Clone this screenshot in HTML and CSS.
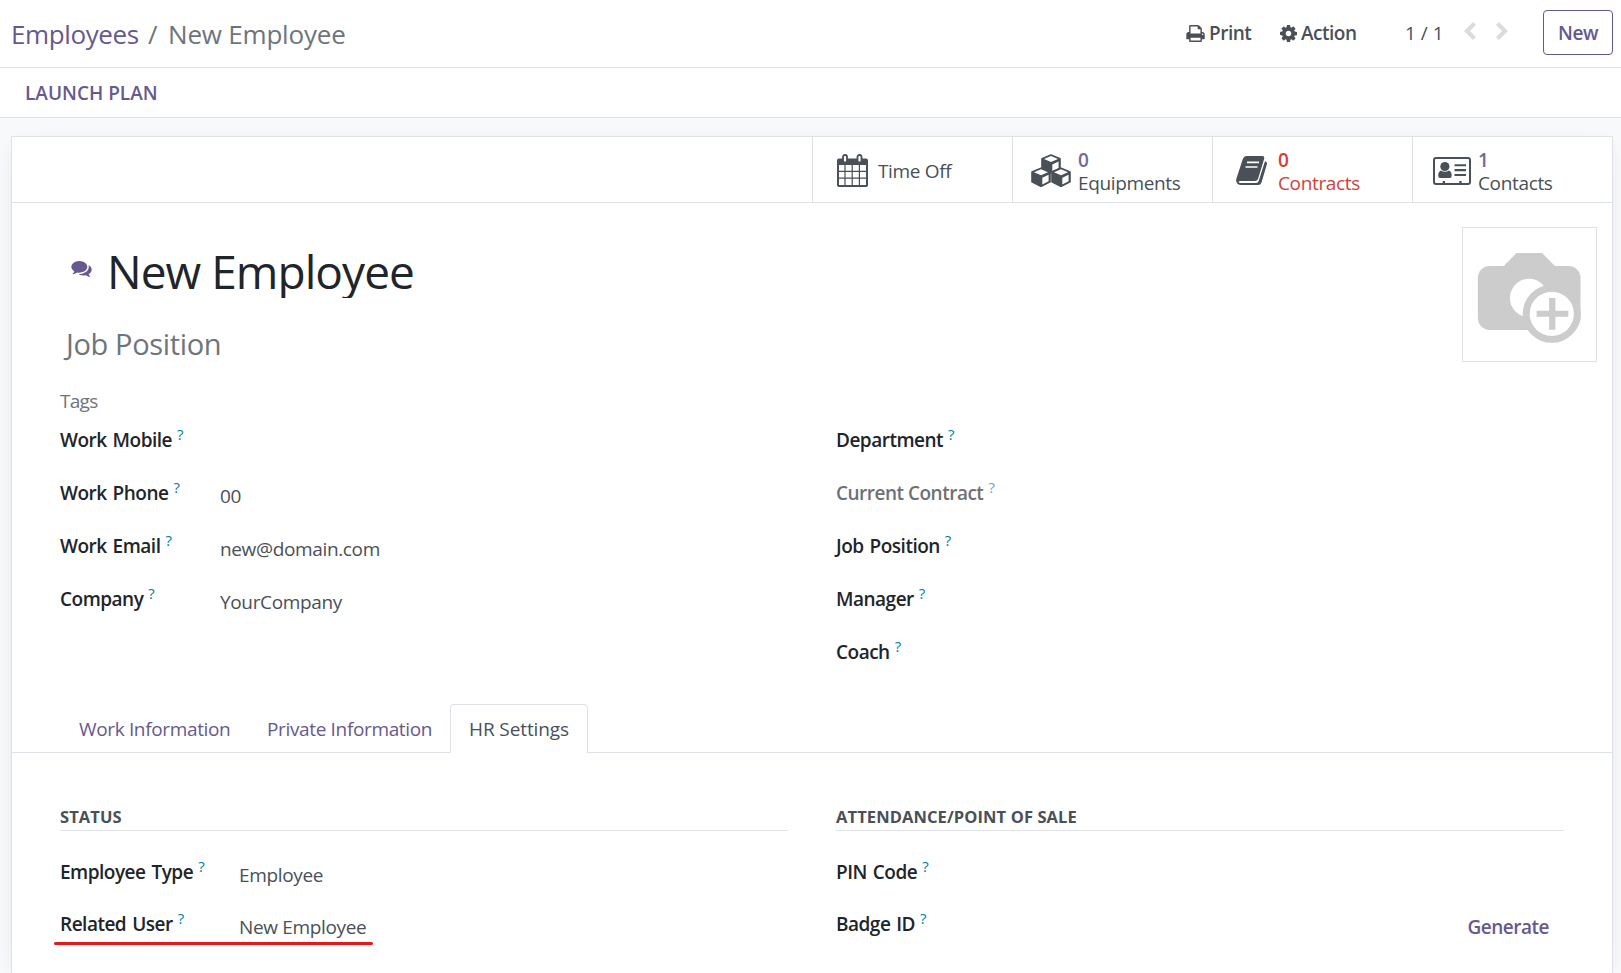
FILE: index.html
```html
<!DOCTYPE html>
<html lang="en">
<head>
<meta charset="utf-8">
<title>New Employee</title>
<link rel="stylesheet" href="styles.css">
</head>
<body>
<header class="control-panel">
  <nav class="breadcrumb"><a class="crumb">Employees</a><span class="sep">/</span><span class="current">New Employee</span></nav>
  <div class="actions">
    <button class="menu print"><svg class="print-icon" viewBox="64 128 1664 1536"><path fill-rule="evenodd" d="M448 1536h896v-256h-896v256zm0-640h896v-384h-160q-40 0-68-28t-28-68v-160h-640v640zm1152 64q0-26-19-45t-45-19-45 19-19 45 19 45 45 19 45-19 19-45zm128 0v416q0 13-9.500 22.500t-22.500 9.500h-224v160q0 40-28 68t-68 28h-960q-40 0-68-28t-28-68v-160h-224q-13 0-22.500-9.500t-9.500-22.500v-416q0-79 56.500-135.500t135.500-56.500h64v-544q0-40 28-68t68-28h672q40 0 88 20t76 48l152 152q28 28 48 76t20 88v256h64q79 0 135.500 56.500t56.500 135.500z"/></svg><span>Print</span></button>
    <button class="menu action"><svg class="gear-icon" viewBox="128 128 1536 1536"><path d="M1152 896q0-106-75-181t-181-75-181 75-75 181 75 181 181 75 181-75 75-181zm512-109v222q0 12-8 23t-20 13l-185 28q-19 54-39 91 35 50 107 138 10 12 10 25t-9 23q-27 37-99 108t-94 71q-12 0-26-9l-138-108q-44 23-91 38-16 136-29 186-7 28-36 28h-222q-14 0-24.500-8.500t-11.500-21.500l-28-184q-49-16-90-37l-141 107q-10 9-25 9-14 0-25-11-126-114-165-168-7-10-7-23 0-12 8-23 15-21 51-66.500t54-70.500q-27-50-41-99l-183-27q-13-2-21-12.500t-8-23.500v-222q0-12 8-23t19-13l186-28q14-46 39-92-40-57-107-138-10-12-10-24 0-10 9-23 26-36 98.500-107.500t94.500-71.500q13 0 26 10l138 107q44-23 91-38 16-136 29-186 7-28 36-28h222q14 0 24.500 8.500t11.500 21.500l28 184q49 16 90 37l142-107q9-9 24-9 13 0 25 10 129 119 165 170 7 8 7 22 0 12-8 23-15 21-51 66.500t-54 70.500q26 50 41 98l183 28q13 2 21 12.500t8 23.500z"/></svg><span>Action</span></button>
    <span class="pager">1 / 1</span>
    <svg class="chevron" viewBox="0 0 12 18"><path d="M10.500 1.500 3 9l7.500 7.500"/></svg>
    <svg class="chevron next" viewBox="0 0 12 18"><path d="M1.500 1.500 9 9l-7.500 7.500"/></svg>
    <button class="new-button">New</button>
  </div>
</header>
<div class="statusbar"><button class="launch">LAUNCH PLAN</button></div>
<main class="view">
  <section class="sheet">
    <div class="button-box">
      <button class="stat time-off">
        <svg class="ico calendar" viewBox="0 0 31 33"><path fill="#495057" fill-rule="evenodd" d="M2 4.500h27q2 0 2 2V31q0 2-2 2H2q-2 0-2-2V6.500q0-2 2-2zM2 11v5.800h5.400V11zm6.600 0v5.800h6V11zm7.200 0v5.800h6V11zm7.200 0v5.800h6V11zM2 18v5.500h5.400V18zm6.600 0v5.500h6V18zm7.200 0v5.500h6V18zm7.200 0v5.500h6V18zM2 24.700V31h5.400v-6.300zm6.600 0V31h6v-6.300zm7.200 0V31h6v-6.300zm7.200 0V31h6v-6.300z"/><rect x="6" y="1" width="4" height="7.500" rx="1.800" fill="#fff" stroke="#495057" stroke-width="1.800"/><rect x="20.500" y="1" width="4" height="7.500" rx="1.800" fill="#fff" stroke="#495057" stroke-width="1.800"/></svg>
        <span class="stat-text">Time Off</span>
      </button>
      <button class="stat equipments">
        <svg class="ico cubes" viewBox="0 0 40 33"><defs><g id="cube"><path fill="#495057" stroke="#495057" stroke-width="1.600" stroke-linejoin="round" d="M10 1l9 3.800v9.800l-9 4.500-9-4.500V4.800z"/><path fill="#fff" d="M10 2l7 3-7 3-7-3zM11.300 10.500l6.300-3v6.400l-6.300 3.200z"/></g></defs><use href="#cube" x="10" y="0"/><use href="#cube" x="0" y="13.300"/><use href="#cube" x="20" y="13.300"/></svg>
        <span class="stat-text"><b>0</b><span>Equipments</span></span>
      </button>
      <button class="stat contracts">
        <svg class="ico book" viewBox="0 0 31 29"><path fill="#495057" d="M10 0h16.500q2.200.3 1.700 2.700L22 23q-.7 2-3 2H4.500Q2.600 25 2.600 26q.2 1 2.200 1H20q2 0 2.700-2L29 5.200l1.500.8q.8 1 .3 2.600L25.500 26.500Q24.800 29 22 29H5Q1.500 29 .4 25.700q-.7-2 .3-4L6.800 3Q7.800.3 10 0z"/><path fill="none" stroke="#fff" stroke-width="1.700" d="M11 6.300h12M9.500 11h12"/></svg>
        <span class="stat-text"><b>0</b><span>Contracts</span></span>
      </button>
      <button class="stat contacts">
        <svg class="ico card" viewBox="0 0 38 28"><rect x="1" y="1" width="36" height="26" rx="2" fill="none" stroke="#495057" stroke-width="2"/><g fill="#495057"><circle cx="11.900" cy="9.500" r="4.600"/><path d="M8 13.500q4 2.500 8 0 2.700 1.300 2.700 5 0 2.500-2 2.500H7.200q-2 0-2-2.500 0-3.700 2.800-5zM21.500 7.300H33v2H21.500zM21.500 12H33v2.300H21.500zM21.500 17H33v2H21.500zM9.700 24h2.300v3H9.700zM26.300 24h2.300v3h-2.300z"/></g></svg>
        <span class="stat-text"><b>1</b><span>Contacts</span></span>
      </button>
    </div>
    <div class="identity">
      <div class="names">
        <div class="title-row">
          <svg class="chat" viewBox="0 256 1792 1408"><path d="M1408 768q0 139-94 257t-256.500 186.500-353.500 68.500q-86 0-176-16-124 88-278 128-36 9-86 16h-3q-11 0-20.500-8t-11.500-21q-1-3-1-6.500t.5-6.500 2-6l2.500-5 3.500-5.500 4-5 4.500-5 4-4.500q5-6 23-25t26-29.500 22.500-29 25-38.500 20.500-44q-124-72-195-177t-71-224q0-139 94-257t256.500-186.500 353.500-68.500 353.500 68.500 256.500 186.500 94 257zm384 256q0 120-71 224.500t-195 176.500q10 24 20.500 44t25 38.500 22.500 29 26 29.500 23 25q1 1 4 4.500t4.500 5 4 5 3.500 5.500l2.500 5 2 6 .5 6.500-1 6.500q-3 14-13 22t-22 7q-50-7-86-16-154-40-278-128-90 16-176 16-271 0-472-132 58 4 88 4 161 0 309-45t264-129q125-92 192-212t67-254q0-77-23-152 129 71 204 178t75 230z"/></svg>
          <h1>New Employee</h1>
        </div>
        <h2>Job Position</h2>
        <div class="tags">Tags</div>
      </div>
      <div class="photo"><svg viewBox="68 52 403 403"><g fill="#ccc"><rect x="113" y="167" width="311" height="194" rx="36"/><path d="M190 169l40-41h78l40 41z"/></g><circle cx="268" cy="264" r="58" fill="#fff"/><circle cx="337" cy="312" r="88" fill="#ccc"/><circle cx="337" cy="312" r="67" fill="#fff"/><path fill="#ccc" d="M329 264h19v39h39v18h-39v39h-19v-39h-38v-18h38z"/></svg></div>
    </div>
    <div class="columns fields">
      <div class="group">
        <div class="row"><label>Work Mobile<sup>?</sup></label></div>
        <div class="row"><label>Work Phone<sup>?</sup></label><span class="value">00</span></div>
        <div class="row"><label>Work Email<sup>?</sup></label><span class="value">new@domain.com</span></div>
        <div class="row"><label>Company<sup>?</sup></label><span class="value">YourCompany</span></div>
      </div>
      <div class="group">
        <div class="row"><label>Department<sup>?</sup></label></div>
        <div class="row muted"><label>Current Contract<sup>?</sup></label></div>
        <div class="row"><label>Job Position<sup>?</sup></label></div>
        <div class="row"><label>Manager<sup>?</sup></label></div>
        <div class="row"><label>Coach<sup>?</sup></label></div>
      </div>
    </div>
    <nav class="tabs"><a class="tab work">Work Information</a><a class="tab private">Private Information</a><a class="tab active">HR Settings</a></nav>
    <div class="columns settings">
      <div class="group">
        <h3>STATUS</h3>
        <div class="row"><label>Employee Type<sup>?</sup></label><span class="value">Employee</span></div>
        <div class="row marked"><label>Related User<sup>?</sup></label><span class="value">New Employee</span></div>
      </div>
      <div class="group">
        <h3>ATTENDANCE/POINT OF SALE</h3>
        <div class="row"><label>PIN Code<sup>?</sup></label></div>
        <div class="row"><label>Badge ID<sup>?</sup></label><a class="generate">Generate</a></div>
      </div>
    </div>
  </section>
</main>
</body>
</html>
```
FILE: styles.css
```css
* { box-sizing: border-box; }
body {
  margin: 0;
  height: 973px;
  overflow: hidden;
  display: flex;
  flex-direction: column;
  background: #fff;
  color: #495057;
  font: 19px/30px "Open Sans", "Noto Sans", sans-serif;
  letter-spacing: -0.35px;
}
button {
  font: inherit;
  letter-spacing: inherit;
  color: inherit;
  background: none;
  border: 0;
  padding: 0;
  margin: 0;
}
svg { display: block; flex: none; }
h1, h2, h3 { margin: 0; font-weight: 400; }

.control-panel {
  flex: none;
  height: 68px;
  padding: 0 8px 0 11px;
  display: flex;
  justify-content: space-between;
  border-bottom: 1px solid #dee2e6;
}
.breadcrumb {
  display: flex;
  padding-top: 15px;
  font-size: 26px;
  line-height: 38px;
  letter-spacing: -0.4px;
  color: #6c757d;
}
.current { letter-spacing: -0.2px; }
.crumb { color: #66598f; width: 137px; }
.sep { width: 20px; }
.actions { display: flex; align-items: flex-start; }
.menu { display: flex; align-items: center; height: 30px; margin-top: 18px; }
.print { width: 94px; }
.action { width: 125px; }
.print-icon { width: 19px; height: 17px; margin-right: 4px; fill: #495057; }
.gear-icon { width: 17px; height: 17px; margin-right: 4px; fill: #495057; }
.menu, .new-button, .launch, label, .generate, .stat b { font-weight: 600; letter-spacing: -0.5px; }
.pager { width: 59px; margin-top: 18px; letter-spacing: 0; }
.chevron { width: 12px; height: 18px; margin: 22px 20px 0 0; fill: none; stroke: #d8dbe0; stroke-width: 4.200; }
.chevron.next { margin-right: 35px; }
.new-button {
  width: 70px;
  height: 45px;
  margin-top: 10px;
  border: 1px solid #66598f;
  border-radius: 4px;
  color: #66598f;
}
.statusbar {
  flex: none;
  height: 50px;
  padding: 10px 25px;
  border-bottom: 1px solid #dee2e6;
}
.launch { color: #66598f; letter-spacing: 0; }

.view { flex: 1; display: flex; min-height: 0; padding: 18px 8px 0 11px; background: #f8f9fa; }
.sheet {
  flex: 1;
  background: #fff;
  border: 1px solid #dee2e6;
  border-bottom: 0;
  box-shadow: 0 5px 20px -8px rgba(0, 0, 0, .15);
}
.button-box {
  height: 66px;
  display: flex;
  justify-content: flex-end;
  border-bottom: 1px solid #dee2e6;
}
.stat {
  width: 200px;
  display: flex;
  align-items: center;
  text-align: left;
  border-left: 1px solid #dee2e6;
}
.stat-text { display: flex; flex-direction: column; padding-top: 4px; line-height: 23px; }
.stat b { color: #7566a0; }
.calendar { width: 31px; height: 33px; margin: 2px 10px 0 24px; }
.cubes { width: 40px; height: 33px; margin: 2px 7px 0 18px; }
.book { width: 31px; height: 29px; margin: 2px 11px 0 23px; }
.card { width: 38px; height: 28px; margin: 2px 7px 0 20px; }
.contracts .stat-text, .contracts b { color: #d23f3a; }

.identity {
  height: 220px;
  padding: 24px 15px 0 48px;
  display: flex;
  justify-content: space-between;
}
.title-row { display: flex; align-items: flex-start; padding: 11px 0 0 11px; }
.chat { width: 21px; height: 16px; margin: 23px 15px 0 0; fill: #66598f; }
h1 { height: 60px; overflow: hidden; font-size: 46px; line-height: 67px; letter-spacing: -0.95px; color: #212529; }
h2 { padding: 26px 0 0 6px; font-size: 29px; line-height: 40px; letter-spacing: -0.35px; color: #6c757d; }
.tags { margin-top: 22px; color: #6c757d; letter-spacing: -0.7px; }
.photo { width: 135px; height: 135px; border: 1px solid #dee2e6; }
.photo svg { width: 133px; height: 133px; }

.columns { display: grid; grid-template-columns: 728px 728px; column-gap: 48px; padding-left: 48px; }
.fields { height: 281px; padding-top: 2px; }
.row { display: flex; height: 53px; }
.row label { width: 160px; color: #212529; white-space: nowrap; word-spacing: 1.5px; }
.row sup {
  margin-left: 5px;
  font-size: 15px;
  line-height: 0;
  vertical-align: 7px;
  font-weight: 400;
  color: #017e9e;
}
.value { padding-top: 3px; }
.muted label { opacity: .65; word-spacing: 0; }

.tabs { height: 49px; display: flex; padding-left: 48px; border-bottom: 1px solid #dee2e6; color: #66598f; white-space: nowrap; }
.tab { height: 49px; padding: 9px 0 0 18px; border: 1px solid transparent; border-bottom: 0; }
.tab.work { width: 188px; }
.tab.private { width: 202px; }
.tab.active { width: 138px; letter-spacing: -0.1px; background: #fff; border-color: #dee2e6; border-radius: 4px 4px 0 0; color: #495057; }

.settings { padding-top: 49px; }
h3 {
  height: 29px;
  margin-bottom: 26px;
  border-bottom: 1px solid #e3e5e8;
  font-size: 16.5px;
  line-height: 30px;
  font-weight: 700;
  letter-spacing: 0.1px;
}
.settings .row { height: 52px; }
.settings label { width: 179px; }
.marked { position: relative; }
.marked::after {
  content: "";
  position: absolute;
  left: -6px;
  top: 33px;
  width: 319px;
  height: 3px;
  border-radius: 2px;
  background: #e3191c;
}
.generate { margin: 3px 15px 0 auto; color: #66598f; }
```
